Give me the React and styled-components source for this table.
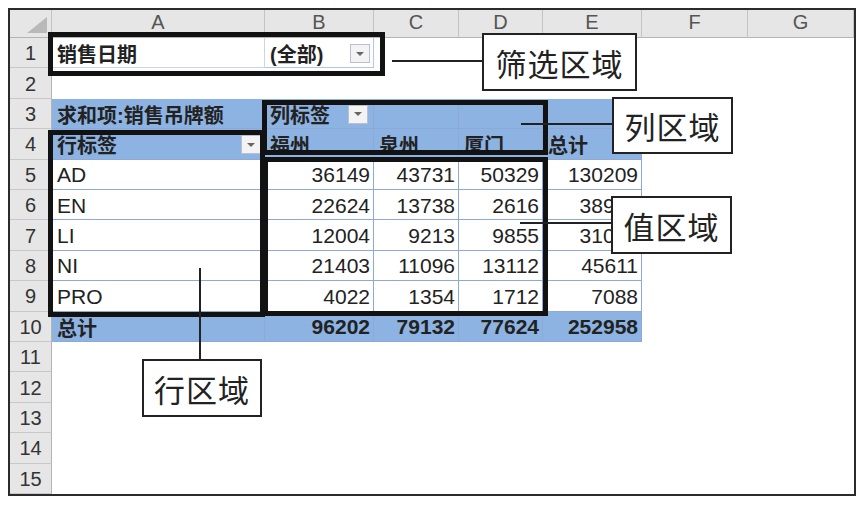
import styled, { createGlobalStyle } from 'styled-components'

const GlobalStyle = createGlobalStyle`
  body {
    margin: 8px;
    background: #ffffff;
    font-family: "Liberation Sans", "Noto Sans CJK SC", sans-serif;
  }
  * { box-sizing: border-box; }
`

const BLUE = '#8db3e2'
const PIVOT_LINE = '#8ea9d8'
// gridlines are switched off in the sheet, only the pivot draws lines
const GRID_LINE = 'transparent'

const Frame = styled.div`
  position: relative;
  width: 848px;
  height: 488px;
  border: 2px solid #2b2b2b;
  background: #ffffff;
`

const Sheet = styled.div`
  display: grid;
  grid-template-columns: 42px 213px 109px 85px 84px 99px 106px 106px;
  grid-template-rows: 28px repeat(15, 1fr);
  height: 100%;
`

const Corner = styled.div`
  position: relative;
  background: #e6e6e6;
  border-right: 1px solid #c4c4c4;
  border-bottom: 1px solid #b4b4b4;

  &:after {
    content: '';
    position: absolute;
    right: 4px;
    bottom: 4px;
    width: 20px;
    height: 16px;
    background: #b9b9b9;
    clip-path: polygon(100% 0, 100% 100%, 0 100%);
  }
`

const ColHead = styled.div`
  display: flex;
  align-items: flex-end;
  justify-content: center;
  padding-bottom: 3px;
  background: #e6e6e6;
  border-right: 1px solid #c4c4c4;
  border-bottom: 1px solid #b4b4b4;
  color: #555;
  font-size: 20px;
`

const RowHead = styled.div`
  display: flex;
  align-items: center;
  justify-content: center;
  padding-top: 2px;
  background: #e6e6e6;
  border-right: 1px solid #b4b4b4;
  border-bottom: 1px solid #c8c8c8;
  color: #333;
  font-size: 20px;
`

const Cell = styled.div`
  display: flex;
  align-items: center;
  justify-content: ${p => (p.$right ? 'flex-end' : 'flex-start')};
  padding: 2px 3px 0 5px;
  background: ${p => (p.$fill ? BLUE : '#ffffff')};
  border-right: 1px solid ${p => p.$line || GRID_LINE};
  border-bottom: 1px solid ${p => p.$line || GRID_LINE};
  color: #222;
  font-size: ${p => (p.$cjk ? '20px' : '21px')};
  font-weight: ${p => (p.$bold ? 700 : 400)};
  white-space: nowrap;
  overflow: hidden;
`

const DropButton = styled.span`
  display: flex;
  align-items: center;
  justify-content: center;
  width: 20px;
  height: 19px;
  margin-left: auto;
  margin-right: ${p => p.$gap || 0}px;
  background: #f3f3f3;
  border: 1px solid #b9c1cf;

  &:after {
    content: '';
    border-left: 4px solid transparent;
    border-right: 4px solid transparent;
    border-top: 4px solid #666;
  }
`

const Outline = styled.div`
  position: absolute;
  border: 5px solid #121212;
  pointer-events: none;
`

const Callout = styled.div`
  position: absolute;
  display: flex;
  align-items: center;
  justify-content: center;
  background: #ffffff;
  border: 2px solid #222;
  color: #222;
  font-family: "Noto Sans CJK SC", sans-serif;
  font-size: 31px;
  letter-spacing: 1px;
`

const Leader = styled.div`
  position: absolute;
  background: #222;
`

const columns = ['A', 'B', 'C', 'D', 'E', 'F', 'G']

const values = [
  ['AD', '36149', '43731', '50329', '130209'],
  ['EN', '22624', '13738', '2616', '38978'],
  ['LI', '12004', '9213', '9855', '31072'],
  ['NI', '21403', '11096', '13112', '45611'],
  ['PRO', '4022', '1354', '1712', '7088'],
]

const totals = ['96202', '79132', '77624', '252958']

const Blank = ({ count }) =>
  Array.from({ length: count }, (_, i) => <Cell key={'b' + i} />)

const App = () => {
  return (
    <>
      <GlobalStyle />
      <Frame>
        <Sheet>
          <Corner />
          {columns.map(c => <ColHead key={c}>{c}</ColHead>)}

          <RowHead>1</RowHead>
          <Cell $cjk $bold $line="#c9d6ea">销售日期</Cell>
          <Cell $cjk $bold $line="#b4c6e7">(全部)<DropButton $gap={0} /></Cell>
          <Blank count={5} />

          <RowHead>2</RowHead>
          <Blank count={7} />

          <RowHead>3</RowHead>
          <Cell $cjk $bold $fill $line={PIVOT_LINE}>求和项:销售吊牌额</Cell>
          <Cell $cjk $bold $fill $line={PIVOT_LINE}>列标签<DropButton $gap={2} /></Cell>
          <Cell $fill $line={PIVOT_LINE} />
          <Cell $fill $line={PIVOT_LINE} />
          <Cell $fill $line={PIVOT_LINE} />
          <Blank count={2} />

          <RowHead>4</RowHead>
          <Cell $cjk $bold $fill $line={PIVOT_LINE}>行标签<DropButton $gap={0} /></Cell>
          {['福州', '泉州', '厦门', '总计'].map(t => (
            <Cell key={t} $cjk $bold $fill $line={PIVOT_LINE}>{t}</Cell>
          ))}
          <Blank count={2} />

          {values.map((row, i) => (
            <Row key={row[0]} index={i + 5} row={row} />
          ))}

          <RowHead>10</RowHead>
          <Cell $cjk $bold $fill $line={PIVOT_LINE}>总计</Cell>
          {totals.map(t => (
            <Cell key={t} $right $bold $fill $line={PIVOT_LINE}>{t}</Cell>
          ))}
          <Blank count={2} />

          {[11, 12, 13, 14, 15].map(n => (
            <EmptyRow key={n} index={n} />
          ))}
        </Sheet>

        <Outline style={{ left: 38, top: 22, width: 337, height: 44 }} />
        <Outline style={{ left: 252, top: 90, width: 286, height: 55 }} />
        <Outline style={{ left: 38, top: 120, width: 217, height: 187 }} />
        <Outline style={{ left: 253, top: 147, width: 285, height: 159 }} />

        <Leader style={{ left: 382, top: 50, width: 90, height: 2 }} />
        <Callout style={{ left: 472, top: 23, width: 155, height: 58 }}>筛选区域</Callout>

        <Leader style={{ left: 511, top: 113, width: 91, height: 2 }} />
        <Callout style={{ left: 602, top: 87, width: 121, height: 57 }}>列区域</Callout>

        <Leader style={{ left: 510, top: 212, width: 91, height: 2 }} />
        <Callout style={{ left: 601, top: 186, width: 121, height: 58 }}>值区域</Callout>

        <Leader style={{ left: 189, top: 258, width: 2, height: 91 }} />
        <Callout style={{ left: 132, top: 349, width: 120, height: 58 }}>行区域</Callout>
      </Frame>
    </>
  )
}

const Row = ({ index, row }) => (
  <>
    <RowHead>{index}</RowHead>
    <Cell $line={PIVOT_LINE}>{row[0]}</Cell>
    {row.slice(1).map((v, i) => (
      <Cell key={i} $right $line={PIVOT_LINE}>{v}</Cell>
    ))}
    <Blank count={2} />
  </>
)

const EmptyRow = ({ index }) => (
  <>
    <RowHead>{index}</RowHead>
    <Blank count={7} />
  </>
)

export default App
